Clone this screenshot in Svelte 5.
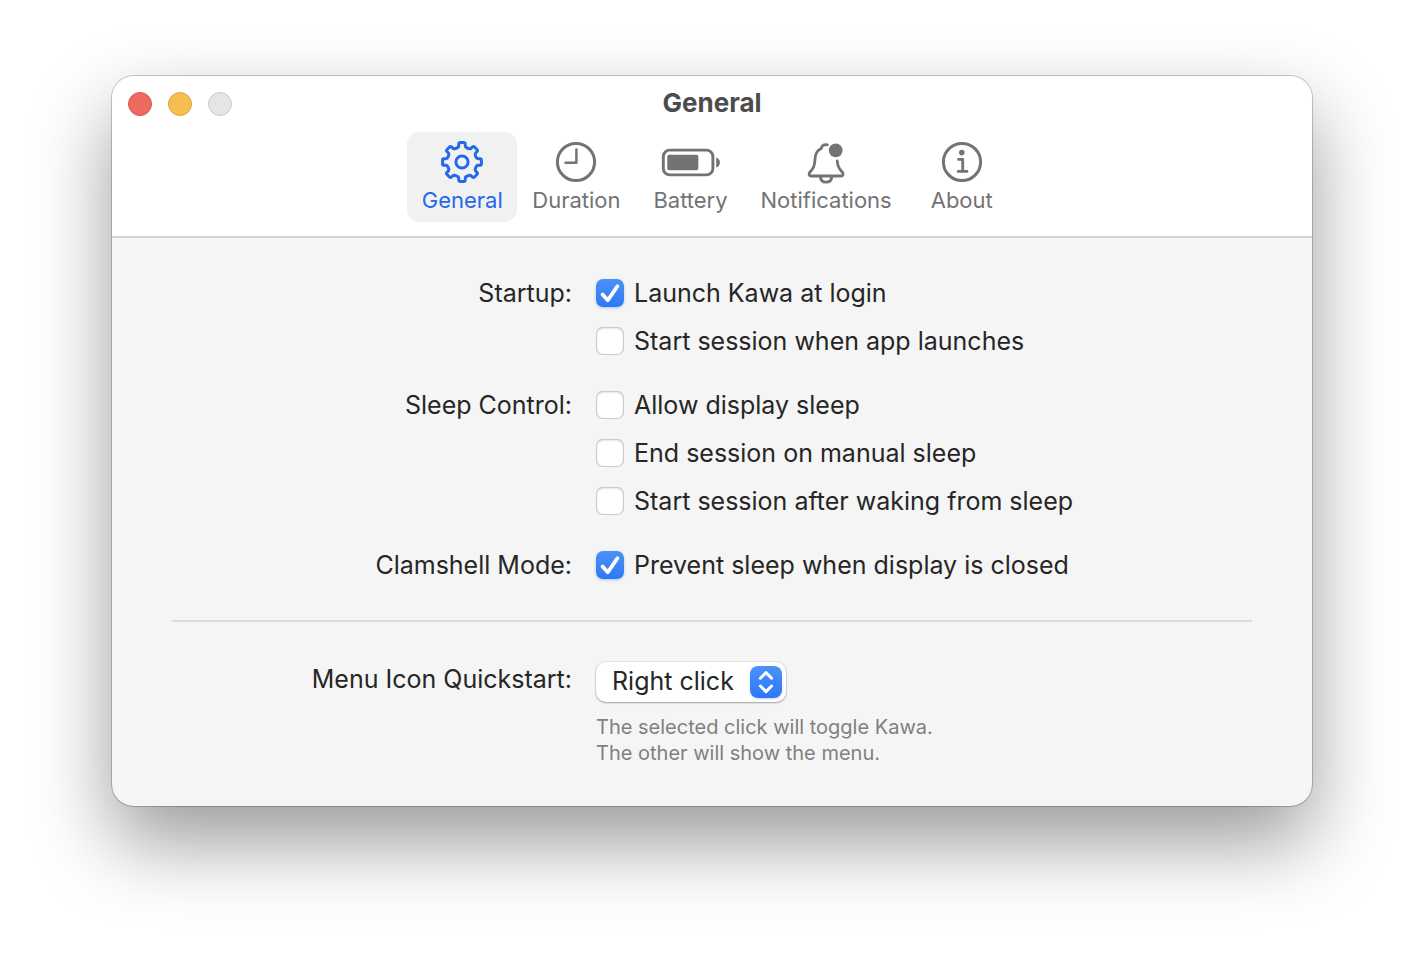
<script>
  const tabs = [
    { id: 'general', label: 'General' },
    { id: 'duration', label: 'Duration' },
    { id: 'battery', label: 'Battery' },
    { id: 'notifications', label: 'Notifications' },
    { id: 'about', label: 'About' }
  ];
  let active = $state('general');
  let title = $derived(tabs.find((t) => t.id === active).label);

  let groups = $state([
    {
      label: 'Startup:',
      options: [
        { label: 'Launch Kawa at login', on: true },
        { label: 'Start session when app launches', on: false }
      ]
    },
    {
      label: 'Sleep Control:',
      options: [
        { label: 'Allow display sleep', on: false },
        { label: 'End session on manual sleep', on: false },
        { label: 'Start session after waking from sleep', on: false }
      ]
    },
    {
      label: 'Clamshell Mode:',
      options: [{ label: 'Prevent sleep when display is closed', on: true }]
    }
  ]);
  let quickstart = $state('Right click');

  // Outline of an eight-tooth gear centred on 0,0.
  function gearPath() {
    const at = (r, deg) => {
      const a = ((deg - 90) * Math.PI) / 180;
      return `${(r * Math.cos(a)).toFixed(2)} ${(r * Math.sin(a)).toFixed(2)}`;
    };
    let d = `M${at(15.2, -15)}`;
    for (let i = 0; i < 8; i++) {
      const t = i * 45;
      d += `Q${at(15.6, t - 12)} ${at(16.6, t - 11.5)}L${at(18.4, t - 10)}Q${at(19.7, t - 9)} ${at(19.5, t - 5)}`;
      d += `L${at(19.5, t + 5)}Q${at(19.7, t + 9)} ${at(18.4, t + 10)}L${at(16.6, t + 11.5)}Q${at(15.6, t + 12)} ${at(15.2, t + 15)}`;
      d += `Q${at(14.6, t + 22.5)} ${at(15.2, t + 30)}`;
    }
    return d + 'Z';
  }
  const gear = gearPath();
</script>

<main>
  <section class="window" aria-label="Kawa settings">
    <header>
      <div class="titlebar">
        <div class="lights">
          <button class="light close" aria-label="Close"></button>
          <button class="light minimize" aria-label="Minimize"></button>
          <button class="light zoom" aria-label="Zoom" disabled></button>
        </div>
        <h1>{title}</h1>
      </div>
      <nav>
        {#each tabs as tab (tab.id)}
          <button class="tab" class:active={active === tab.id} onclick={() => (active = tab.id)}>
            <svg viewBox="-32 -24 64 48" width="64" height="48" fill="none" stroke="currentColor" stroke-width="3" stroke-linecap="round" stroke-linejoin="round" aria-hidden="true">
              {#if tab.id === 'general'}
                <path d={gear} />
                <circle r="6.1" />
              {:else if tab.id === 'duration'}
                <circle r="18.6" />
                <path d="M.4-12.5V.8H-10.5" stroke-width="2.5" />
              {:else if tab.id === 'battery'}
                <rect x="-27.7" y="-11.9" width="49.6" height="24.8" rx="6.5" stroke-width="2.9" />
                <rect x="-23.7" y="-7.2" width="31" height="15.4" rx="2" fill="currentColor" stroke="none" />
                <path d="M25.2-4.6c2.2.6 3.7 2.6 3.7 5.1s-1.5 4.5-3.7 5.1z" fill="currentColor" stroke="none" />
              {:else if tab.id === 'notifications'}
                <circle cx="9.7" cy="-11.7" r="6.9" fill="currentColor" stroke="none" />
                <path d="M1.2-17.2C-1.8-17.6-4.2-16-4.8-13.4-8.6-11.6-10.6-8.4-10.9-4-11.2 1.5-11.2 3.6-13.4 6.8L-16.4 10.6C-17.4 12.2-16.8 14-14.9 14H15.1C17 14 17.6 12.2 16.6 10.6L13.6 6.8C11.8 4.2 11.4 2 11.2-1" stroke-width="2.8" />
                <path d="M-5.6 14.6C-5.4 18-3.2 20.2.1 20.2S5.6 18 5.8 14.6" stroke-width="2.8" />
              {:else}
                <circle r="18.6" />
                <circle cx="-.2" cy="-9.4" r="2.8" fill="currentColor" stroke="none" />
                <path d="M-3.4-2.6H.7V9.2M-3.8 9.4H5" stroke-width="2.8" />
              {/if}
            </svg>
            <span>{tab.label}</span>
          </button>
        {/each}
      </nav>
    </header>

    <form onsubmit={(e) => e.preventDefault()}>
      <div class="groups">
        {#each groups as group, g}
          <div class="row" role="group" aria-labelledby="group-{g}">
            <span class="caption" id="group-{g}">{group.label}</span>
            <div class="options">
              {#each group.options as option}
                <label class="option">
                  <span class="box">
                    <input type="checkbox" bind:checked={option.on} />
                    {#if option.on}
                      <svg viewBox="0 0 28 28" width="28" height="28" fill="none" stroke="#fff" stroke-width="3.8" stroke-linecap="round" stroke-linejoin="round" aria-hidden="true">
                        <path d="M6.6 15.4 11.8 21.2 21.4 7.2" />
                      </svg>
                    {/if}
                  </span>
                  {option.label}
                </label>
              {/each}
            </div>
          </div>
        {/each}
      </div>

      <hr />

      <div class="row">
        <label class="caption quick" for="quickstart">Menu Icon Quickstart:</label>
        <div>
          <div class="popup">
            <select id="quickstart" bind:value={quickstart} aria-describedby="quickstart-hint">
              <option>Right click</option>
              <option>Left click</option>
            </select>
            <span class="arrows">
              <svg viewBox="0 0 32 32" width="32" height="32" fill="none" stroke="#fff" stroke-width="3" stroke-linecap="round" stroke-linejoin="round" aria-hidden="true">
                <path d="M10.4 12.2 16 6.600l5.600 5.600M10.400 20 16 25.600 21.600 20" />
              </svg>
            </span>
          </div>
          <p id="quickstart-hint">The selected click will toggle Kawa.<br />The other will show the menu.</p>
        </div>
      </div>
    </form>
  </section>
</main>

<style>
  :global(body) {
    background: #fff;
  }
  main {
    padding: 76px 112px 148px;
    font-family: Inter, 'Liberation Sans', sans-serif;
    font-size: 25px;
    color: #262626;
    overflow: hidden;
  }
  .window {
    border-radius: 22px;
    background: #f5f5f5;
    box-shadow:
      0 0 0 1px rgba(0, 0, 0, 0.18),
      0 0 2px rgba(0, 0, 0, 0.1),
      0 36px 80px rgba(0, 0, 0, 0.4);
  }
  header {
    background: #fff;
    border-radius: 22px 22px 0 0;
    border-bottom: 2px solid #d2d2d2;
    padding-bottom: 14px;
  }
  .titlebar {
    display: grid;
    grid-template-columns: 1fr auto 1fr;
    align-items: center;
    height: 56px;
    padding: 0 16px;
  }
  .lights {
    display: flex;
    gap: 16px;
  }
  .light {
    width: 24px;
    height: 24px;
    padding: 0;
    border: 1px solid #c9c9c9;
    border-radius: 50%;
    background: #e5e5e5;
  }
  .close {
    background: #ed6a5e;
    border-color: #d65a4f;
  }
  .minimize {
    background: #f5bf4f;
    border-color: #d9a33d;
  }
  h1 {
    margin: 0;
    font-size: 26px;
    font-weight: 700;
    line-height: 54px;
    height: 56px;
    color: #4c4c4c;
  }
  nav {
    display: flex;
    justify-content: center;
    gap: 4px;
  }
  .tab {
    display: flex;
    flex-direction: column;
    align-items: center;
    min-width: 110px;
    height: 90px;
    padding: 6px 11px 0;
    border: 0;
    border-radius: 12px;
    background: none;
    font: inherit;
    font-size: 22px;
    line-height: 28px;
    color: #737373;
  }
  .tab.active {
    background: #f1f1f1;
    color: #2469e8;
  }
  form {
    padding: 40px 60px;
  }
  .groups {
    display: grid;
    gap: 34px;
  }
  .row {
    display: grid;
    grid-template-columns: 25fr 41fr;
    column-gap: 24px;
    align-items: start;
  }
  .caption {
    text-align: right;
    line-height: 30px;
  }
  .quick {
    line-height: 34px;
  }
  .options {
    display: grid;
    gap: 18px;
    justify-items: start;
  }
  .option {
    display: flex;
    align-items: center;
    gap: 10px;
    line-height: 30px;
  }
  .box,
  .popup {
    display: inline-grid;
  }
  .box > *,
  .popup > * {
    grid-area: 1 / 1;
  }
  .box svg {
    pointer-events: none;
  }
  input {
    appearance: none;
    width: 28px;
    height: 28px;
    margin: 0;
    border-radius: 7px;
    background: #fff;
    box-shadow:
      inset 0 0 0 1px #cbcbcb,
      inset 0 1px 3px rgba(0, 0, 0, 0.2);
  }
  input:checked {
    background: linear-gradient(#4a93f8, #2f77f6);
    box-shadow: 0 1px 3px rgba(47, 119, 246, 0.35);
  }
  hr {
    height: 2px;
    margin: 40px 0;
    border: 0;
    background: #dcdcdc;
  }
  .popup {
    align-items: center;
  }
  select {
    appearance: none;
    width: 190px;
    height: 40px;
    padding: 0 48px 2px 16px;
    border: 0;
    border-radius: 10px;
    background: #fff;
    box-shadow:
      0 0 0 1px rgba(0, 0, 0, 0.06),
      0 1px 2px rgba(0, 0, 0, 0.3);
    font: inherit;
    color: inherit;
  }
  .arrows {
    display: grid;
    justify-self: end;
    margin-right: 4px;
    border-radius: 8px;
    background: linear-gradient(#4a93f8, #2f77f6);
    box-shadow: 0 1px 2px rgba(47, 119, 246, 0.3);
    pointer-events: none;
  }
  p {
    margin: 12px 0 0;
    font-size: 20px;
    line-height: 26px;
    color: #808080;
  }
</style>
